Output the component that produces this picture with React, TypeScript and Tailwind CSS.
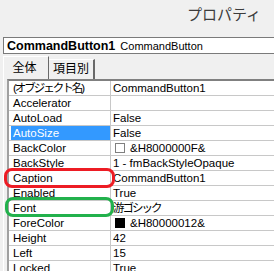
const font = { fontFamily: '"Liberation Sans", "Noto Sans CJK JP", sans-serif' }

type Row = {
  name: string
  value: string
  swatch?: 'white' | 'black'
  selected?: boolean
  tightName?: boolean
  tightValue?: boolean
}

const rows: Row[] = [
  { name: '(オブジェクト名)', value: 'CommandButton1', tightName: true },
  { name: 'Accelerator', value: '' },
  { name: 'AutoLoad', value: 'False' },
  { name: 'AutoSize', value: 'False', selected: true },
  { name: 'BackColor', value: '&H8000000F&', swatch: 'white' },
  { name: 'BackStyle', value: '1 - fmBackStyleOpaque' },
  { name: 'Caption', value: 'CommandButton1' },
  { name: 'Enabled', value: 'True' },
  { name: 'Font', value: '游ゴシック', tightValue: true },
  { name: 'ForeColor', value: '&H80000012&', swatch: 'black' },
  { name: 'Height', value: '42' },
  { name: 'Left', value: '15' },
  { name: 'Locked', value: 'True' },
]

export default function App() {
  return (
    <div
      className="relative h-[271px] w-[274px] overflow-hidden bg-[#f0f0f0] text-black"
      style={font}
    >
      {/* title */}
      <div className="h-[37px] pl-[187px] pt-[6px] text-[15px] leading-[18px] text-[#3c3c3c]">
        プロパティ
      </div>

      {/* object combo */}
      <div className="ml-[3px] flex h-[17px] items-center whitespace-nowrap border border-r-0 border-[#7a7a7a] bg-white pl-[3px] text-[11px] leading-[14px]">
        <span className="text-[12.5px] font-bold">CommandButton1</span>
        <span className="ml-[5px]">CommandButton</span>
      </div>

      {/* tabs */}
      <div className="mt-[2px] flex h-[23px] items-end pl-[3px] text-[12px] leading-[14px]">
        <div className="flex h-[23px] w-[46px] items-center justify-center border-l border-r border-t border-white border-r-[#696969] pb-[1px] pr-[3px]">
          全体
        </div>
        <div className="flex h-[20px] w-[46px] items-center justify-center border-r-2 border-t border-white border-r-[#696969] pb-[1px]">
          項目別
        </div>
      </div>

      {/* grid */}
      <div className="ml-[3px] border-l border-white pl-[3px]">
        <div className="border-l-2 border-t-2 border-l-[#a0a0a0] border-t-[#808080] bg-white text-[11.5px] leading-[14px]">
          {rows.map((row) => (
            <div key={row.name} className="flex h-[15px] border-b border-[#c8c8c8]">
              <div className="w-[102px] shrink-0 border-r border-[#c8c8c8] pl-[2px]">
                <div
                  className={
                    row.selected
                      ? 'h-[14px] bg-[#3399ff] pl-[2px] text-white'
                      : 'h-[14px] whitespace-nowrap pl-[2px]'
                  }
                >
                  <span className={row.tightName ? 'tracking-[-2px]' : ''}>{row.name}</span>
                </div>
              </div>
              <div className="flex items-center whitespace-nowrap pl-[2px]">
                {row.swatch && (
                  <span
                    className={
                      row.swatch === 'white'
                        ? 'mr-[5px] ml-[2px] inline-block h-[10px] w-[10px] border border-[#808080] bg-white'
                        : 'mr-[5px] ml-[2px] inline-block h-[10px] w-[10px] bg-black'
                    }
                  />
                )}
                <span className={row.tightValue ? 'tracking-[-2px]' : ''}>{row.value}</span>
              </div>
            </div>
          ))}
        </div>
      </div>

      {/* annotations */}
      <div className="absolute left-[4px] top-[168px] h-[20px] w-[111px] rounded-[8px] border-[3px] border-[#ed1c24]" />
      <div className="absolute left-[5px] top-[197px] h-[20px] w-[109px] rounded-[8px] border-[3px] border-[#22b14c]" />
    </div>
  )
}
